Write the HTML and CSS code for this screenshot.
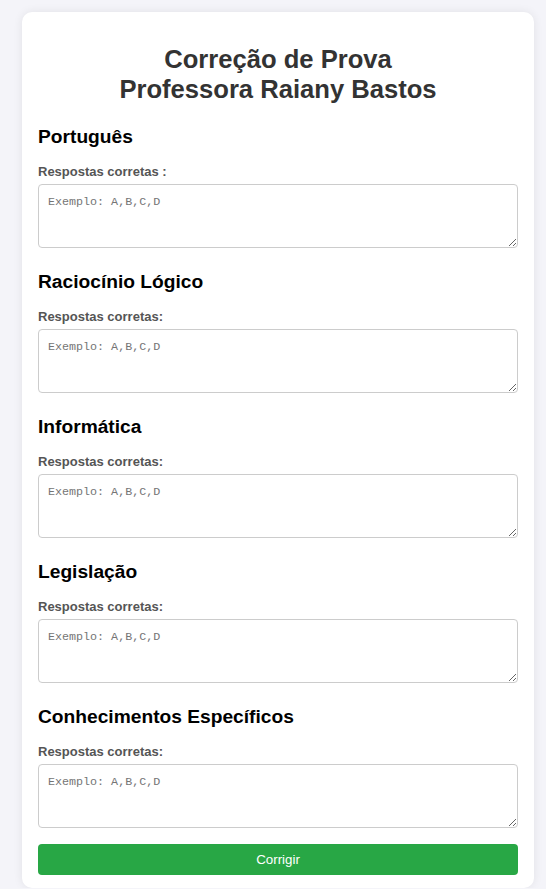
FILE: index.html
```html
<!DOCTYPE html>
<html lang="pt-BR">
<head>
<meta charset="utf-8">
<title>Correção de Prova</title>
<link rel="stylesheet" href="styles.css">
</head>
<body>
<div class="card">
  <h1>Correção de Prova<br>Professora Raiany Bastos</h1>
  <div class="section">
    <h2>Português</h2>
    <label>Respostas corretas :</label>
    <textarea placeholder="Exemplo: A,B,C,D"></textarea>
  </div>
  <div class="section">
    <h2>Raciocínio Lógico</h2>
    <label>Respostas corretas:</label>
    <textarea placeholder="Exemplo: A,B,C,D"></textarea>
  </div>
  <div class="section">
    <h2>Informática</h2>
    <label>Respostas corretas:</label>
    <textarea placeholder="Exemplo: A,B,C,D"></textarea>
  </div>
  <div class="section">
    <h2>Legislação</h2>
    <label>Respostas corretas:</label>
    <textarea placeholder="Exemplo: A,B,C,D"></textarea>
  </div>
  <div class="section">
    <h2>Conhecimentos Específicos</h2>
    <label>Respostas corretas:</label>
    <textarea placeholder="Exemplo: A,B,C,D"></textarea>
  </div>
  <button class="btn">Corrigir</button>
</div>
</body>
</html>
```
FILE: styles.css
```css
html, body {
  margin: 0;
  padding: 0;
  background: #f4f4f9;
  font-family: "Liberation Sans", Arial, sans-serif;
}
.card {
  width: 512px;
  box-sizing: border-box;
  margin: 12px 0 0 22px;
  padding: 32px 16px 13px;
  background: #fff;
  border-radius: 10px;
  box-shadow: 0 0 10px rgba(0, 0, 0, 0.08);
}
h1 {
  margin: 0;
  text-align: center;
  font-size: 25.6px;
  line-height: 30px;
  font-weight: bold;
  color: #333;
}
.section h2 {
  margin: 23px 0 17px;
  font-size: 19.2px;
  line-height: 21px;
  font-weight: bold;
  color: #000;
}
.section:first-of-type h2 {
  margin-top: 22px;
}
.section label {
  display: block;
  font-size: 13px;
  line-height: 16px;
  font-weight: bold;
  color: #555;
  margin-bottom: 4px;
}
.section textarea {
  display: block;
  width: 100%;
  height: 64px;
  box-sizing: border-box;
  margin: 0;
  padding: 10px 9px 8px;
  border: 1px solid #ccc;
  border-radius: 4px;
  font-family: "Liberation Mono", "DejaVu Sans Mono", monospace;
  font-size: 11.7px;
  line-height: 15px;
  resize: vertical;
}
.section textarea::placeholder {
  color: #757575;
}
.btn {
  display: block;
  width: 100%;
  height: 31px;
  margin-top: 16px;
  border: none;
  border-radius: 4px;
  background: #28a745;
  color: #fff;
  font-family: "Liberation Sans", Arial, sans-serif;
  font-size: 13.33px;
  cursor: pointer;
}
```
